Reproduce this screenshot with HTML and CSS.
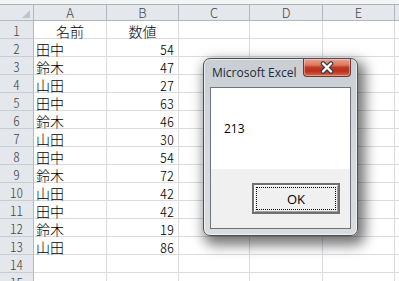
FILE: index.html
```html
<!DOCTYPE html>
<html lang="ja">
<head>
<meta charset="utf-8">
<link rel="stylesheet" href="styles.css">
</head>
<body>
<div class="topstrip"></div>
<div class="sheet">
  <div class="hd corner"><span class="tri"></span></div>
  <div class="hd col">A</div><div class="hd col">B</div><div class="hd col">C</div><div class="hd col">D</div><div class="hd col">E</div><div class="hd col last"></div>

  <div class="hd rn">1</div><div class="c ctr">名前</div><div class="c ctr">数値</div><div class="c"></div><div class="c"></div><div class="c"></div><div class="c last"></div>
  <div class="hd rn">2</div><div class="c">田中</div><div class="c num">54</div><div class="c"></div><div class="c"></div><div class="c"></div><div class="c last"></div>
  <div class="hd rn">3</div><div class="c">鈴木</div><div class="c num">47</div><div class="c"></div><div class="c"></div><div class="c"></div><div class="c last"></div>
  <div class="hd rn">4</div><div class="c">山田</div><div class="c num">27</div><div class="c"></div><div class="c"></div><div class="c"></div><div class="c last"></div>
  <div class="hd rn">5</div><div class="c">田中</div><div class="c num">63</div><div class="c"></div><div class="c"></div><div class="c"></div><div class="c last"></div>
  <div class="hd rn">6</div><div class="c">鈴木</div><div class="c num">46</div><div class="c"></div><div class="c"></div><div class="c"></div><div class="c last"></div>
  <div class="hd rn">7</div><div class="c">山田</div><div class="c num">30</div><div class="c"></div><div class="c"></div><div class="c"></div><div class="c last"></div>
  <div class="hd rn">8</div><div class="c">田中</div><div class="c num">54</div><div class="c"></div><div class="c"></div><div class="c"></div><div class="c last"></div>
  <div class="hd rn">9</div><div class="c">鈴木</div><div class="c num">72</div><div class="c"></div><div class="c"></div><div class="c"></div><div class="c last"></div>
  <div class="hd rn">10</div><div class="c">山田</div><div class="c num">42</div><div class="c"></div><div class="c"></div><div class="c"></div><div class="c last"></div>
  <div class="hd rn">11</div><div class="c">田中</div><div class="c num">42</div><div class="c"></div><div class="c"></div><div class="c"></div><div class="c last"></div>
  <div class="hd rn">12</div><div class="c">鈴木</div><div class="c num">19</div><div class="c"></div><div class="c"></div><div class="c"></div><div class="c last"></div>
  <div class="hd rn">13</div><div class="c">山田</div><div class="c num">86</div><div class="c"></div><div class="c"></div><div class="c"></div><div class="c last"></div>
  <div class="hd rn">14</div><div class="c"></div><div class="c"></div><div class="c"></div><div class="c"></div><div class="c"></div><div class="c last"></div>
  <div class="hd rn">15</div><div class="c"></div><div class="c"></div><div class="c"></div><div class="c"></div><div class="c"></div><div class="c last"></div>
</div>

<div class="dialog">
  <div class="titlebar">
    <span class="title">Microsoft Excel</span>
    <div class="close">
      <svg width="18" height="13" viewBox="0 0 18 13">
        <path d="M5 2.5 L13 10.5 M13 2.5 L5 10.5" stroke="#3a3f46" stroke-width="4.6" stroke-linecap="round"/>
        <path d="M5 2.5 L13 10.5 M13 2.5 L5 10.5" stroke="#ffffff" stroke-width="2.4" stroke-linecap="round"/>
      </svg>
    </div>
  </div>
  <div class="client">
    <div class="msg">213</div>
    <div class="btnbar">
      <div class="okbtn"><span class="focus">OK</span></div>
    </div>
  </div>
</div>
</body>
</html>
```
FILE: styles.css
```css
html, body {
  margin: 0;
  padding: 0;
  background: #ffffff;
  overflow: hidden;
  width: 399px;
  height: 281px;
}

body {
  font-family: "Noto Sans CJK JP", sans-serif;
  position: relative;
}

.topstrip {
  height: 4px;
  background: #f3f4f6;
  border-bottom: 1px solid #aeb3b9;
}

.sheet {
  display: grid;
  grid-template-columns: 34px 73px 72px 71px 73px 72px 1fr;
  grid-template-rows: 16px;
  grid-auto-rows: 18px;
}

.hd {
  box-sizing: border-box;
  background: #e4e7eb;
  border-right: 1px solid #b3b8be;
  border-bottom: 1px solid #b3b8be;
  color: #454545;
  font-size: 13px;
  font-weight: 300;
  display: flex;
  justify-content: center;
}

.col {
  line-height: 14px;
  padding-top: 1px;
}

.col.last {
  border-right: none;
}

.rn {
  line-height: 15px;
  padding-top: 2px;
  border-bottom-color: #c9cdd2;
  font-feature-settings: "hwid";
}

.corner {
  justify-content: flex-end;
  align-items: flex-end;
  padding: 0 3px 2px 0;
}

.tri {
  width: 0;
  height: 0;
  border-left: 8px solid transparent;
  border-bottom: 8px solid #bfc4ca;
}

.c {
  box-sizing: border-box;
  border-right: 1px solid #dadcdf;
  border-bottom: 1px solid #dadcdf;
  font-size: 14px;
  font-weight: 300;
  line-height: 16px;
  padding: 2px 0 0 2px;
  color: #000;
  white-space: nowrap;
}

.c.ctr {
  text-align: center;
  padding-left: 0;
}

.c.num {
  text-align: right;
  padding-right: 4px;
  font-feature-settings: "hwid";
}

.c.last {
  border-right: none;
}

/* dialog */
.dialog {
  position: absolute;
  left: 203px;
  top: 58px;
  width: 155px;
  height: 178px;
  box-sizing: border-box;
  border: 1px solid #4a4f56;
  border-radius: 7px;
  padding: 0 6px 6px 6px;
  background: linear-gradient(#c9ced4, #d3d7db 40%, #dadde0);
  box-shadow: 4px 6px 13px 3px rgba(0, 0, 0, 0.55), inset 0 0 0 1px rgba(255, 255, 255, 0.6);
  display: flex;
  flex-direction: column;
  font-family: "Open Sans", "Noto Sans", sans-serif;
}

.titlebar {
  height: 28px;
  display: flex;
  align-items: flex-start;
}

.title {
  padding: 5px 0 0 2px;
  font-size: 12px;
  line-height: 17px;
  color: #1c2a3a;
}

.close {
  margin-left: auto;
  width: 48px;
  height: 18px;
  box-sizing: border-box;
  border: 1px solid #6a3a34;
  border-top: none;
  border-radius: 0 0 4px 4px;
  background: linear-gradient(#eba392 0%, #d97a62 35%, #c23a22 50%, #b8301b 70%, #d4664c 100%);
  box-shadow: inset 0 0 0 1px rgba(255, 220, 210, 0.45);
  display: flex;
  justify-content: center;
  align-items: center;
}

.client {
  flex: 1;
  display: flex;
  flex-direction: column;
  border: 1px solid #6f747b;
  background: #f0f0f0;
}

.msg {
  height: 81px;
  background: #ffffff;
  display: flex;
  align-items: center;
  padding-left: 13px;
  font-size: 12px;
  color: #000;
}

.btnbar {
  flex: 1;
  display: flex;
  justify-content: flex-end;
  align-items: flex-start;
  padding: 14px 10px 0 0;
}

.okbtn {
  width: 88px;
  height: 31px;
  box-sizing: border-box;
  border: 2px solid #707070;
  box-shadow: inset 1px 1px 0 #ffffff, inset -1px -1px 0 #a0a0a0;
  background: #f0f0f0;
  padding: 2px;
  display: flex;
}

.focus {
  flex: 1;
  border: 1px dotted #000;
  display: flex;
  justify-content: center;
  align-items: center;
  font-size: 13px;
  color: #000;
}
```
